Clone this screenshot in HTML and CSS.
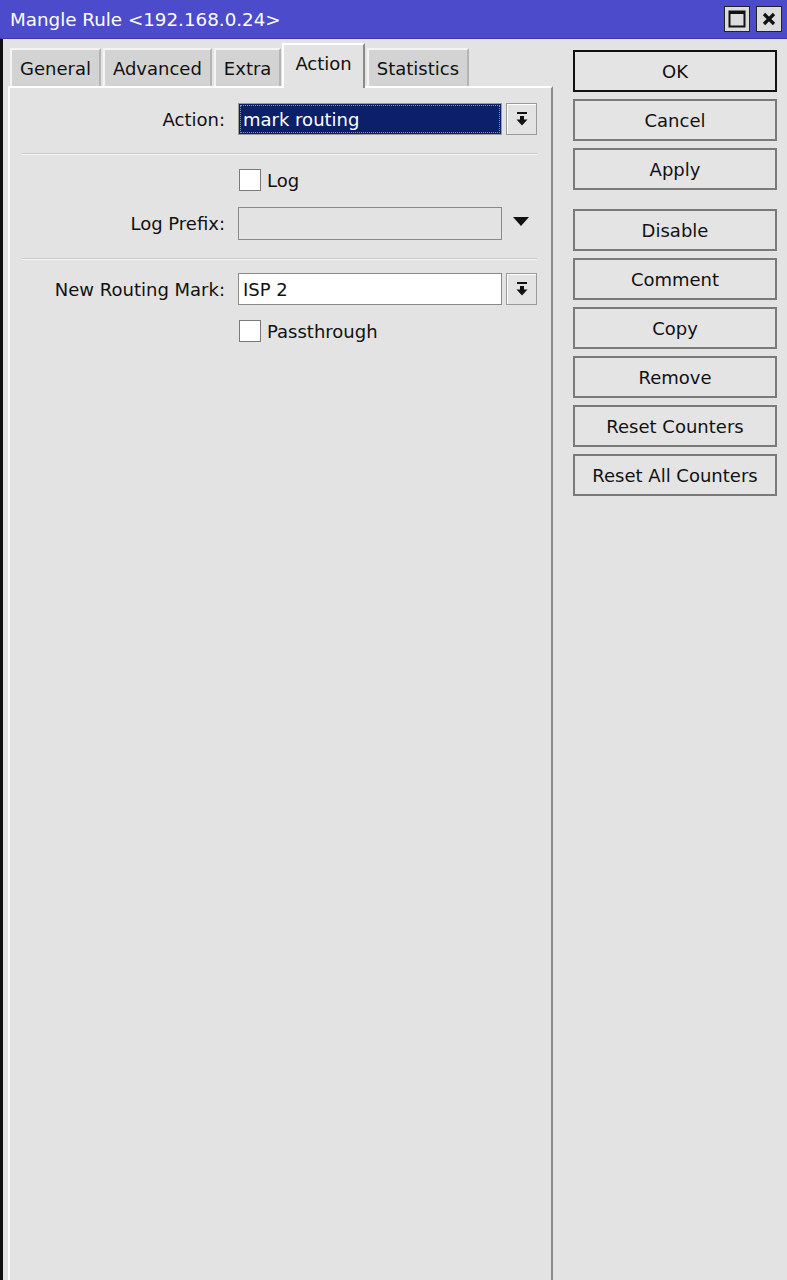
FILE: index.html
```html
<!DOCTYPE html>
<html>
<head>
<meta charset="utf-8">
<link rel="stylesheet" href="styles.css">
</head>
<body>
<div class="window">
  <div class="titlebar">
    <span class="title">Mangle Rule &lt;192.168.0.24&gt;</span>
    <div class="title-btns">
      <span class="tbtn"><svg width="18" height="18" viewBox="0 0 18 18"><rect x="1.5" y="1.5" width="15" height="15" fill="none" stroke="#111" stroke-width="2"/><rect x="1" y="1" width="16" height="3" fill="#111"/></svg></span>
      <span class="tbtn"><svg width="18" height="18" viewBox="0 0 18 18"><path d="M4 4 L14 14 M14 4 L4 14" stroke="#111" stroke-width="3.2"/></svg></span>
    </div>
  </div>
  <div class="main">
    <div class="left">
      <div class="tabs">
        <div class="tab">General</div>
        <div class="tab">Advanced</div>
        <div class="tab">Extra</div>
        <div class="tab active">Action</div>
        <div class="tab">Statistics</div>
      </div>
      <div class="panel">
        <div class="row first">
          <label class="lbl">Action:</label>
          <div class="input selected"><span class="sel-text">mark routing</span></div>
          <span class="ddbtn"><svg width="12" height="14" viewBox="0 0 12 14"><rect x="1" y="0" width="10" height="2" fill="#111"/><rect x="4" y="4" width="4" height="4" fill="#111"/><path d="M0.5 7.5 H11.5 L6 13.5 Z" fill="#111"/></svg></span>
        </div>
        <div class="sep"></div>
        <div class="row check-row log-row">
          <span class="lbl"></span>
          <span class="checkbox"></span><span class="check-text">Log</span>
        </div>
        <div class="row prefix-row">
          <label class="lbl">Log Prefix:</label>
          <div class="input disabled"></div>
          <span class="tri"></span>
        </div>
        <div class="sep sep2"></div>
        <div class="row mark-row">
          <label class="lbl">New Routing Mark:</label>
          <div class="input">ISP 2</div>
          <span class="ddbtn"><svg width="12" height="14" viewBox="0 0 12 14"><rect x="1" y="0" width="10" height="2" fill="#111"/><rect x="4" y="4" width="4" height="4" fill="#111"/><path d="M0.5 7.5 H11.5 L6 13.5 Z" fill="#111"/></svg></span>
        </div>
        <div class="row check-row pass-row">
          <span class="lbl"></span>
          <span class="checkbox"></span><span class="check-text">Passthrough</span>
        </div>
      </div>
    </div>
    <div class="right">
      <div class="btn default">OK</div>
      <div class="btn">Cancel</div>
      <div class="btn">Apply</div>
      <div class="btn group">Disable</div>
      <div class="btn">Comment</div>
      <div class="btn">Copy</div>
      <div class="btn">Remove</div>
      <div class="btn">Reset Counters</div>
      <div class="btn">Reset All Counters</div>
    </div>
  </div>
</div>
</body>
</html>
```

FILE: styles.css
```css
* { box-sizing: border-box; }
html, body { margin: 0; padding: 0; }
body {
  background: #e3e3e3;
  font-family: "DejaVu Sans", sans-serif;
  font-size: 18px;
  color: #111;
}
.window {
  width: 787px;
  height: 1280px;
  display: flex;
  flex-direction: column;
  overflow: hidden;
}
.titlebar {
  height: 39px;
  background: #4b4bcb;
  display: flex;
  align-items: center;
  justify-content: space-between;
  padding-left: 10px;
  padding-right: 5px;
  border-bottom: 1px solid #3a3aa8;
}
.title { color: #fff; font-size: 18.3px; }
.title-btns { display: flex; gap: 6px; }
.tbtn {
  width: 26px;
  height: 26px;
  background: #dcdcdc;
  border: 1px solid #222;
  display: flex;
  align-items: center;
  justify-content: center;
}
.main {
  flex: 1;
  display: flex;
  border-left: 3px solid #111;
}
.left {
  width: 552px;
  display: flex;
  flex-direction: column;
}
.tabs {
  height: 47px;
  display: flex;
  align-items: flex-end;
  gap: 2px;
  padding-left: 7px;
}
.tab {
  height: 38px;
  padding: 0 8px;
  background: #d3d3d3;
  border-left: 2px solid #f4f4f4;
  border-top: 2px solid #f4f4f4;
  border-right: 2px solid #b4b4b4;
  display: flex;
  align-items: center;
}
.tab.active {
  height: 45px;
  margin-left: -1px;
  margin-bottom: -2px;
  padding: 0 11px 6px;
  background: #e3e3e3;
  border-left: 2px solid #fff;
  border-top: 2px solid #fff;
  border-right: 2px solid #8a8a8a;
  position: relative;
  z-index: 1;
}
.panel {
  flex: 1;
  margin-left: 5px;
  margin-right: 2px;
  border-left: 2px solid #fff;
  border-top: 2px solid #fff;
  border-right: 2px solid #8a8a8a;
  padding-top: 15px;
}
.row {
  display: flex;
  align-items: center;
}
.lbl {
  width: 215px;
  flex: none;
  text-align: right;
  margin-right: 13px;
}
.input {
  width: 264px;
  height: 32px;
  background: #fff;
  border: 1px solid #8a8a8a;
  padding: 0 4px;
  display: flex;
  align-items: center;
}
.input.selected {
  background: #0b2068;
  border: 1px solid #9a9a9a;
  padding: 0 2px;
}
.sel-text {
  color: #fff;
  outline: 1px dotted #8890b8;
  padding: 0 2px;
  height: 26px;
  width: 100%;
  display: flex;
  align-items: center;
}
.input.disabled {
  background: #e3e3e3;
  height: 33px;
}
.ddbtn {
  width: 31px;
  height: 32px;
  margin-left: 4px;
  background: #e3e3e3;
  border: 1px solid #9a9a9a;
  box-shadow: inset 1px 1px 0 #fff;
  display: flex;
  align-items: center;
  justify-content: center;
}
.tri {
  margin-left: 11px;
  width: 0;
  height: 0;
  border-left: 8px solid transparent;
  border-right: 8px solid transparent;
  border-top: 9px solid #111;
  margin-top: -4px;
}
.sep {
  margin: 18px 14px 0 12px;
  height: 2px;
  border-top: 1px solid #c9c9c9;
  border-bottom: 1px solid #f6f6f6;
}
.log-row { margin-top: 14px; }
.prefix-row { margin-top: 16px; }
.sep2 { margin-top: 18px; }
.mark-row { margin-top: 13px; }
.pass-row { margin-top: 15px; }
.check-row .lbl { margin-right: 14px; }
.checkbox {
  width: 22px;
  height: 22px;
  background: #fff;
  border: 1px solid #7a7a7a;
  flex: none;
}
.check-text { margin-left: 6px; }
.right {
  flex: 1;
  padding: 11px 10px 0 18px;
  display: flex;
  flex-direction: column;
  gap: 7px;
}
.btn {
  width: 204px;
  height: 42px;
  border: 2px solid #7a7a7a;
  background: #e4e4e4;
  display: flex;
  align-items: center;
  justify-content: center;
}
.btn.default { border-color: #111; }
.btn.group { margin-top: 12px; }
```
